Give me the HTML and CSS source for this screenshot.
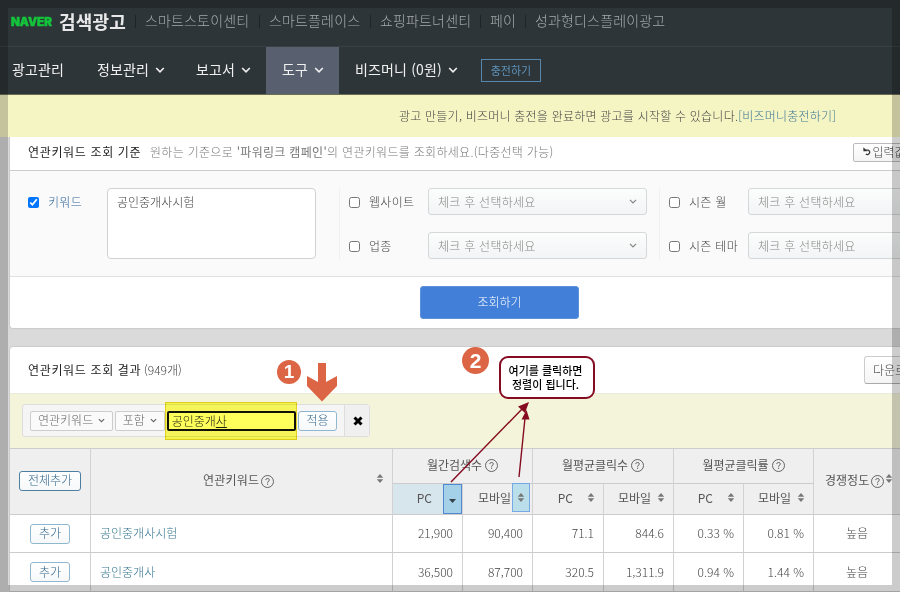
FILE: index.html
```html
<!DOCTYPE html>
<html lang="ko">
<head>
    <meta charset="UTF-8">
    <meta name="viewport" content="width=device-width, initial-scale=1.0">
    <title>네이버 검색광고</title>
    <link rel="stylesheet" href="styles.css">
</head>
<body>
    <svg class="simbolos" width="0" height="0">
        <symbol id="flecha" viewBox="0 0 10 6"><path d="M1.2 1l3.8 3.8L8.8 1" fill="none" stroke="currentColor" stroke-width="1.6"/></symbol>
        <symbol id="orden" viewBox="0 0 8 10"><path d="M4 0l3.600 4.200H.4zM4 10L.4 5.800h7.200z" fill="currentColor"/></symbol>
        <symbol id="ayuda" viewBox="0 0 13 13"><circle cx="6.5" cy="6.5" r="6" fill="none" stroke="currentColor" stroke-width=".9"/><path d="M4.8 5.1c0-2.2 3.5-2.2 3.5-.1 0 1.2-1.7 1.3-1.7 2.7M6.6 8.7v1.2" fill="none" stroke="currentColor"/></symbol>
    </svg>

    <header class="top">
        <span class="naver">NAVER</span>
        <span class="logo">검색광고</span>
        <a class="t1">스마트스토이센티</a>
        <a class="t2">스마트플레이스</a>
        <a class="t3">쇼핑파트너센티</a>
        <a class="t4">페이</a>
        <a class="t5">성과형디스플레이광고</a>
    </header>

    <nav class="menu">
        <a class="m1">광고관리</a>
        <a class="m2">정보관리 <svg><use href="#flecha"/></svg></a>
        <a class="m3">보고서 <svg><use href="#flecha"/></svg></a>
        <a class="m4 activo">도구 <svg><use href="#flecha"/></svg></a>
        <a class="m5">비즈머니 (0원) <svg><use href="#flecha"/></svg></a>
        <button class="cargar">충전하기</button>
    </nav>

    <div class="aviso"><span>광고 만들기, 비즈머니 충전을 완료하면 광고를 시작할 수 있습니다.</span><a>[비즈머니충전하기]</a></div>

    <section class="panel criterios">
        <div class="cabecera">
            <h2>연관키워드 조회 기준</h2>
            <p>원하는 기준으로 <b>'파워링크 캠페인'</b>의 연관키워드를 조회하세요.(다중선택 가능)</p>
            <button class="reiniciar"><svg viewBox="0 0 11 11"><path d="M2 3.600h4.400a3 3 0 1 1-2.600 5.200" fill="none" stroke="#333" stroke-width="1.700"/><path d="M.5 0v5.200h5.200z" fill="#333"/></svg>입력값 초기화</button>
        </div>
        <div class="campos">
            <label class="clave"><input type="checkbox" checked>키워드</label>
            <textarea>공인중개사시험</textarea>
            <div class="grupo">
                <label><input type="checkbox">웹사이트</label>
                <div class="select">체크 후 선택하세요<svg><use href="#flecha"/></svg></div>
                <label><input type="checkbox">업종</label>
                <div class="select">체크 후 선택하세요<svg><use href="#flecha"/></svg></div>
            </div>
            <div class="grupo">
                <label><input type="checkbox">시즌 월</label>
                <div class="select">체크 후 선택하세요</div>
                <label><input type="checkbox">시즌 테마</label>
                <div class="select">체크 후 선택하세요</div>
            </div>
        </div>
        <div class="accion"><button class="buscar">조회하기</button></div>
    </section>

    <section class="panel resultados">
        <div class="cabecera">
            <h2>연관키워드 조회 결과</h2><span class="total">(949개)</span>
            <button class="descargar">다운로드</button>
        </div>
        <div class="filtro">
            <div class="caja">
                <div class="mini f1">연관키워드<svg><use href="#flecha"/></svg></div>
                <div class="mini f2">포함<svg><use href="#flecha"/></svg></div>
                <div class="texto">공인중개<u>사</u><i class="marcador"></i></div>
                <button class="azul aplicar">적용</button>
                <span class="cerrar"><svg viewBox="0 0 10 10"><path d="M1.5 1.5l7 7m0-7l-7 7" stroke="#000" stroke-width="3"/></svg></span>
            </div>
        </div>
        <table>
            <colgroup>
                <col class="c81"><col class="c302"><col class="c70"><col class="c70"><col class="c71"><col class="c70"><col class="c70"><col class="c70"><col>
            </colgroup>
            <thead>
                <tr class="h1">
                    <th rowspan="2"><button class="azul todos">전체추가</button></th>
                    <th rowspan="2"><div class="nombre"><span>연관키워드</span><svg class="ayuda"><use href="#ayuda"/></svg><svg class="orden"><use href="#orden"/></svg></div></th>
                    <th colspan="2"><div class="centro">월간검색수<svg class="ayuda"><use href="#ayuda"/></svg></div></th>
                    <th colspan="2"><div class="centro">월평균클릭수<svg class="ayuda"><use href="#ayuda"/></svg></div></th>
                    <th colspan="2"><div class="centro">월평균클릭률<svg class="ayuda"><use href="#ayuda"/></svg></div></th>
                    <th rowspan="2"><div class="nivel">경쟁정도<svg class="ayuda"><use href="#ayuda"/></svg><svg class="orden"><use href="#orden"/></svg></div></th>
                </tr>
                <tr class="h2">
                    <th class="elegido"><div class="sub">PC<span class="marca fuerte"><svg viewBox="0 0 8 4"><path d="M0 0h7L3.500 4z" fill="#31404a"/></svg></span></div></th>
                    <th><div class="sub">모바일<span class="marca"><svg class="orden"><use href="#orden"/></svg></span></div></th>
                    <th><div class="sub">PC<svg class="orden"><use href="#orden"/></svg></div></th>
                    <th><div class="sub">모바일<svg class="orden"><use href="#orden"/></svg></div></th>
                    <th><div class="sub">PC<svg class="orden"><use href="#orden"/></svg></div></th>
                    <th><div class="sub">모바일<svg class="orden"><use href="#orden"/></svg></div></th>
                </tr>
            </thead>
            <tbody>
                <tr>
                    <td class="boton"><button class="azul">추가</button></td>
                    <td class="palabra">공인중개사시험</td>
                    <td>21,900</td><td>90,400</td><td>71.1</td><td>844.6</td><td>0.33 %</td><td>0.81 %</td>
                    <td class="alto">높음</td>
                </tr>
                <tr>
                    <td class="boton"><button class="azul">추가</button></td>
                    <td class="palabra">공인중개사</td>
                    <td>36,500</td><td>87,700</td><td>320.5</td><td>1,311.9</td><td>0.94 %</td><td>1.44 %</td>
                    <td class="alto">높음</td>
                </tr>
            </tbody>
        </table>
    </section>

    <!-- notas sobre la pantalla -->
    <div class="paso uno">1</div>
    <div class="paso dos">2</div>
    <div class="globo">여기를 클릭하면<br>정렬이 됩니다.</div>
    <svg class="notas" viewBox="0 0 900 592">
        <path d="M318 363h8v19l11-6v10l-15 15.500-15-15.500v-10l11 6z" fill="#dc6545"/>
        <path d="M451 482l72-74M519 477l6-59" stroke="#850b20" stroke-width="1.400"/>
        <path d="M529 402l-4 11-7-6.500zM526.500 410l3 9.500h-8z" fill="#850b20"/>
    </svg>
    <div class="marco"></div>
</body>
</html>
```

FILE: styles.css
```css
* {
    box-sizing: border-box;
}

html {
    overflow: hidden;
}

body {
    margin: 0;
    width: 900px;
    height: 592px;
    overflow: hidden;
    position: relative;
    background-color: #dadada;
    font-family: "Noto Sans CJK KR", sans-serif;
    font-size: 12px;
    font-weight: 300;
    color: #444;
    white-space: nowrap;
}

button, textarea {
    font: inherit;
    padding: 0;
}

h2, p {
    margin: 0;
}

.simbolos {
    display: block;
}

.top {
    height: 47px;
    padding: 0 0 4px 11px;
    background-color: #2e3538;
    border-bottom: 1px solid #3a4144;
    display: flex;
    align-items: center;
    font-size: 14px;
    color: #a4a9ab;
    letter-spacing: 0.15px;
}

.naver {
    width: 44px;
    margin: 2px 4px 0 0;
    font-family: Inter, "Open Sans", sans-serif;
    font-weight: 900;
    font-size: 11.5px;
    letter-spacing: 0;
    color: #14c43c;
    -webkit-text-stroke: 0.5px #14c43c;
}

.logo {
    width: 76px;
    font-size: 18px;
    font-weight: 700;
    color: #e8e8e8;
}

.top a {
    height: 13px;
    line-height: 11px;
    padding-left: 9px;
    border-left: 1px solid #1f2426;
}

.t1 { width: 124px; }
.t2 { width: 111px; }
.t3 { width: 110px; }
.t4 { width: 45px; }

.menu {
    height: 48px;
    background-color: #2e3538;
    border-bottom: 1px solid #6b6c56;
    display: flex;
    align-items: center;
    font-size: 14px;
    font-weight: 400;
    color: #f0f0f0;
    letter-spacing: 0.15px;
}

.menu a {
    height: 47px;
    padding-bottom: 3px;
    display: flex;
    align-items: center;
    gap: 6px;
}

.menu svg {
    width: 10px;
    height: 6px;
    margin-top: 2px;
}

.m1 { width: 97px; padding-left: 12px; }
.m2 { width: 99px; }
.m3 { width: 70px; }
.m4 { width: 73px; padding-left: 16px; }
.m5 { width: 142px; padding-left: 16px; }

.activo {
    background-color: #586070;
}

.cargar {
    width: 60px;
    height: 23px;
    padding-bottom: 2px;
    background: none;
    border: 1px solid #5687ac;
    color: #5e93bb;
    font-size: 11px;
}

.aviso {
    height: 42px;
    padding: 0 0 2px 399px;
    background-color: #f5f4c3;
    display: flex;
    align-items: center;
    letter-spacing: 0.22px;
}

.aviso a {
    color: #3f7896;
}

.panel {
    width: 940px;
    margin-left: 9px;
    background-color: #fff;
    border: 1px solid #ccc;
    border-radius: 4px;
}

.criterios {
    height: 192px;
    border-top: 0;
    border-radius: 0 0 4px 4px;
}

.cabecera {
    display: flex;
    align-items: center;
    padding-left: 18px;
}

.cabecera h2 {
    padding-bottom: 2px;
    font-size: 12px;
    font-weight: 400;
    color: #222;
    letter-spacing: 0.65px;
}

.criterios .cabecera {
    height: 34px;
    padding-bottom: 3px;
    border-bottom: 1px solid #ccc;
}

.cabecera p {
    margin-left: 9px;
    padding-bottom: 2px;
    color: #777;
    letter-spacing: 0.3px;
    width: 703px;
}

.cabecera p b {
    font-weight: 400;
}

.criterios h2 {
    width: 113px;
}

.reiniciar {
    width: 90px;
    height: 19px;
    display: flex;
    align-items: center;
    padding: 0 0 2px 9px;
    color: #444;
    background: linear-gradient(#fff, #f4f4f4);
    border: 1px solid #bbb;
    border-radius: 2px;
}

.reiniciar svg {
    width: 11px;
    height: 11px;
    margin-right: 1px;
}

.campos {
    height: 106px;
    padding: 17px 0 17px 18px;
    background-color: #fafafa;
    border-bottom: 1px solid #e2e2e2;
    display: flex;
}

.campos > * {
    flex-shrink: 0;
}

label {
    height: 27px;
    display: flex;
    align-items: center;
    letter-spacing: 0.3px;
}

input[type="checkbox"] {
    width: 11px;
    height: 11px;
    margin: 1px 9px 0 0;
}

.clave {
    width: 79px;
    color: #2d6397;
}

textarea {
    width: 209px;
    height: 71px;
    padding: 4px 9px;
    color: #444;
    border: 1px solid #d2d2d2;
    border-radius: 4px;
    resize: none;
    overflow: hidden;
}

.grupo {
    width: 320px;
    height: 71px;
    display: grid;
    grid-template-columns: 79px 219px;
    row-gap: 17px;
    padding-left: 9px;
    border-left: 1px dotted #e8e8e8;
}

textarea + .grupo {
    margin-left: 23px;
}

.select {
    height: 27px;
    display: flex;
    align-items: center;
    justify-content: space-between;
    padding: 0 9px;
    color: #888;
    letter-spacing: 0.25px;
    background: linear-gradient(#fcfdfd, #f2f4f5);
    border: 1px solid #d5d7d8;
    border-radius: 3px;
}

.select svg {
    width: 8px;
    height: 5px;
}

.accion {
    padding: 9px 0 0 410px;
}

.buscar {
    display: block;
    width: 159px;
    height: 33px;
    padding-bottom: 2px;
    color: #fff;
    background-color: #417fd9;
    border: 1px solid #5d92d8;
    border-radius: 3px;
}

.resultados {
    margin-top: 17px;
}

.resultados .cabecera {
    height: 46px;
}

.total {
    width: 685px;
    margin-left: 3px;
    padding-bottom: 2px;
}

.resultados h2 {
    width: 113px;
}

.descargar {
    width: 80px;
    height: 28px;
    margin-left: 35px;
    padding: 0 0 2px 8px;
    text-align: left;
    color: #444;
    background: linear-gradient(#fff, #f5f5f5);
    border: 1px solid #ccc;
    border-bottom-color: #aaa;
    border-radius: 3px;
}

.filtro {
    height: 56px;
    padding: 10px 0 0 12px;
    background-color: #f4f4da;
    border-top: 1px solid #ececdc;
    border-bottom: 1px solid #ccc;
}

.caja {
    width: 348px;
    height: 33px;
    display: flex;
    align-items: center;
    padding-left: 7px;
    background-color: #f5f5f5;
    border: 1px solid #ddd;
    border-radius: 3px;
}

.mini {
    height: 20px;
    display: flex;
    align-items: center;
    justify-content: space-between;
    padding: 0 7px 2px 7px;
    color: #666;
    background-color: #fafafa;
    border: 1px solid #ccc;
    border-radius: 2px;
}

.mini svg {
    width: 7px;
    height: 5px;
    margin-top: 2px;
}

.f1 { width: 83px; margin-right: 2px; }
.f2 { width: 50px; margin-right: 2px; }

.texto {
    position: relative;
    width: 130px;
    height: 20px;
    line-height: 15px;
    padding-left: 3px;
    color: #222;
    background-color: #fff;
    border: 2px solid #111;
    border-radius: 2px;
}

/* resaltado amarillo encima del campo */
.marcador {
    position: absolute;
    top: -11px;
    left: -4px;
    width: 132px;
    height: 38px;
    background-color: #ffff5c;
    border: 1px solid #e8d820;
    mix-blend-mode: multiply;
}

.azul {
    width: 40px;
    height: 20px;
    line-height: 15px;
    padding-bottom: 2px;
    color: #32668a;
    background: linear-gradient(#fff, #f6f8f9);
    border: 1px solid #8fb8d0;
    border-radius: 3px;
}

.aplicar {
    width: 39px;
    margin: 0 7px 0 2px;
}

.cerrar {
    height: 31px;
    width: 25px;
    padding-left: 8px;
    background-color: #f0f0f0;
    border-left: 1px solid #ddd;
    display: flex;
    align-items: center;
}

.cerrar svg {
    width: 10px;
    height: 10px;
}

table {
    width: 938px;
    table-layout: fixed;
    border-spacing: 0;
}

.c81 { width: 81px; }
.c302 { width: 302px; }
.c70 { width: 70px; }
.c71 { width: 71px; }

th, td {
    padding: 0;
    border-right: 1px solid #d2d2d2;
    border-bottom: 1px solid #ccc;
}

th {
    font-weight: 400;
    background-color: #efefef;
    color: #555;
}

.h1 th { height: 35px; }
.h2 th { height: 31px; }

.todos {
    width: 62px;
    margin-bottom: 2px;
    border-color: #4d7f9f;
    font-weight: 300;
}

.centro, .nombre, .nivel {
    display: flex;
    align-items: center;
    justify-content: center;
    padding-bottom: 4px;
}

.ayuda {
    width: 13px;
    height: 13px;
    margin: 3px 0 0 3px;
}

.orden {
    width: 8px;
    height: 9px;
    color: #777;
}

.nombre {
    padding-left: 112px;
    justify-content: flex-start;
    letter-spacing: 0.2px;
}

.nombre .ayuda {
    margin-left: 2px;
}

.nombre .orden {
    margin: -2px 8px 0 auto;
}

.nivel {
    justify-content: flex-start;
    padding-left: 11px;
}

.nivel .ayuda {
    margin-left: 2px;
}

.nivel .orden {
    margin: -2px 0 0 1px;
}

.sub {
    height: 30px;
    display: flex;
    align-items: center;
    justify-content: flex-end;
    gap: 6px;
    padding: 0 8px 3px 0;
}

th:nth-child(odd) .sub {
    gap: 14px;
}

.elegido {
    background-color: #d7e5ed;
}

.marca {
    width: 18px;
    height: 29px;
    margin: 0 -6px 0 -5px;
    display: flex;
    align-items: center;
    justify-content: center;
    background-color: #badeea;
    border: 1px solid #76a8e6;
}

.fuerte {
    width: 19px;
    height: 30px;
    margin: 2px -8px 0 -3px;
    padding-top: 4px;
    background-color: #a4d1e8;
    border-color: #5089d2;
}

.fuerte svg {
    width: 8px;
    height: 4px;
}

td {
    height: 38px;
    padding: 0 9px 2px 0;
    text-align: right;
    background-color: #fff;
}

tbody tr + tr td {
    height: 39px;
}

td.boton {
    padding: 0;
    text-align: center;
}

td.palabra {
    padding-left: 9px;
    text-align: left;
    color: #387790;
}

td.alto {
    padding-left: 32px;
    text-align: left;
}

.paso {
    position: absolute;
    width: 24px;
    height: 24px;
    line-height: 24px;
    border-radius: 50%;
    background-color: #dc6545;
    color: #fff;
    font-family: "Liberation Sans", sans-serif;
    font-size: 19px;
    font-weight: bold;
    text-align: center;
}

.uno {
    left: 277px;
    top: 360px;
}

.dos {
    left: 462px;
    top: 347px;
    width: 27px;
    height: 27px;
    line-height: 27px;
    font-size: 21px;
}

.globo {
    position: absolute;
    left: 499px;
    top: 356px;
    width: 96px;
    height: 43px;
    padding: 5px 3px 0 0;
    border: 2px solid #850b20;
    border-radius: 9px;
    background-color: #fff;
    color: #000;
    font-size: 11px;
    font-weight: 500;
    line-height: 14px;
    text-align: center;
}

.notas {
    position: absolute;
    left: 0;
    top: 0;
    width: 900px;
    height: 592px;
}

/* borde oscuro alrededor de toda la pantalla */
.marco {
    position: absolute;
    left: 0;
    top: 0;
    width: 900px;
    height: 592px;
    border: 8px solid rgba(0, 0, 0, 0.2);
    border-bottom-width: 7px;
}
```
